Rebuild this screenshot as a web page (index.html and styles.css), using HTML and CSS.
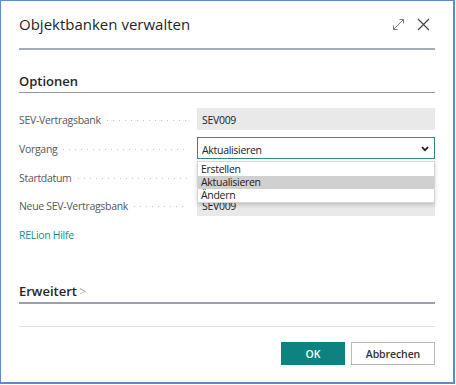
FILE: index.html
```html
<!DOCTYPE html>
<html lang="de">
<head>
<meta charset="utf-8">
<title>Objektbanken verwalten</title>
<link rel="stylesheet" href="styles.css">
</head>
<body>
<div class="dialog">
  <header class="head">
    <h1 class="title">Objektbanken verwalten</h1>
    <div class="head-icons">
      <svg class="icon" width="13" height="13" viewBox="0 0 13 13" aria-hidden="true">
        <path d="M1.5 11.5 L11.5 1.5 M7.5 1.5 H11.5 V5.5 M1.5 7.5 V11.5 H5.5" fill="none" stroke="#7a7a7a" stroke-width="1"/>
      </svg>
      <svg class="icon" width="13" height="13" viewBox="0 0 13 13" aria-hidden="true">
        <path d="M1 1 L12 12 M12 1 L1 12" fill="none" stroke="#444" stroke-width="1.2"/>
      </svg>
    </div>
  </header>

  <section class="section">
    <h2 class="section-title">Optionen</h2>
    <div class="rows">
      <div class="row">
        <span class="label">SEV-Vertragsbank</span><span class="leader"></span>
        <div class="field readonly">SEV009</div>
      </div>
      <div class="row">
        <span class="label">Vorgang</span><span class="leader"></span>
        <div class="field select">
          <span>Aktualisieren</span>
          <svg class="chev" width="8" height="6" viewBox="0 0 8 6" aria-hidden="true"><path d="M1 1.2 L4 4.2 L7 1.2" fill="none" stroke="#222" stroke-width="1.8"/></svg>
          <ul class="menu">
            <li>Erstellen</li>
            <li class="active">Aktualisieren</li>
            <li>Ändern</li>
          </ul>
        </div>
      </div>
      <div class="row">
        <span class="label">Startdatum</span><span class="leader"></span>
        <div class="field readonly"></div>
      </div>
      <div class="row last">
        <span class="label">Neue SEV-Vertragsbank</span><span class="leader"></span>
        <div class="field readonly">SEV009</div>
      </div>
    </div>
    <a class="help" href="#">RELion Hilfe</a>
  </section>

  <section class="section ext">
    <h2 class="section-title">Erweitert<span class="gt">&gt;</span></h2>
  </section>

  <footer class="foot">
    <button class="btn primary">OK</button>
    <button class="btn">Abbrechen</button>
  </footer>
</div>
</body>
</html>
```

FILE: styles.css
```css
* { box-sizing: border-box; }
html, body { margin: 0; padding: 0; background: #fff; }
body {
  width: 456px;
  height: 385px;
  font-family: "Open Sans", "Noto Sans", sans-serif;
  color: #212121;
}
.dialog {
  width: 455px;
  height: 384px;
  border: 1px solid #5a8ccc;
  border-right-width: 2px;
  border-bottom-width: 2px;
  padding: 0 18px 0 18px;
  display: flex;
  flex-direction: column;
}
.head {
  height: 49px;
  flex: none;
  display: flex;
  align-items: center;
  justify-content: space-between;
  border-bottom: 2px solid #a3abb8;
}
.title {
  margin: 0;
  padding-bottom: 1px;
  font-size: 15px;
  line-height: 20px;
  font-weight: 400;
  color: #1f1f1f;
}
.head-icons {
  display: flex;
  gap: 12px;
  margin-right: 5px;
}
.icon { display: block; }

.section { display: flex; flex-direction: column; }
.section-title {
  margin: 22px 0 0 0;
  padding-bottom: 2px;
  font-size: 13px;
  line-height: 18px;
  font-weight: 600;
  color: #262626;
  border-bottom: 1px solid #8d96a3;
}
.rows {
  margin-top: 15px;
  display: flex;
  flex-direction: column;
  gap: 7px;
}
.row {
  display: flex;
  align-items: center;
  height: 22px;
}
.row.last { margin-top: -1px; }
.label {
  font-size: 10.5px;
  letter-spacing: -0.3px;
  color: #585858;
  white-space: nowrap;
  padding-top: 2px;
  padding-right: 6px;
}
.leader {
  flex: 1;
  height: 1px;
  margin-top: 2px;
  margin-right: 10px;
  background: repeating-linear-gradient(to right, #c2c2c2 0 1px, transparent 1px 6px);
}
.field {
  flex: 0 0 238px;
  height: 22px;
  font-size: 10.5px;
  letter-spacing: -0.3px;
  display: flex;
  align-items: center;
  padding-left: 5px;
  padding-top: 2px;
  color: #222;
}
.readonly { background: #e9e9ea; }
.select {
  position: relative;
  border: 1px solid #2e8a8a;
  background: #fff;
  justify-content: space-between;
  padding-left: 4px;
  padding-top: 3px;
  padding-right: 5px;
}
.chev { display: block; margin-top: -2px; }
.menu {
  position: absolute;
  left: -1px;
  top: 23px;
  width: 238px;
  margin: 0;
  padding: 1px 0 0 0;
  list-style: none;
  background: #fff;
  border: 1px solid #d6d6d6;
  box-shadow: 0 2px 4px rgba(0,0,0,0.18);
  z-index: 2;
}
.menu li {
  height: 13px;
  line-height: 13px;
  padding-left: 3px;
  font-size: 10.5px;
  letter-spacing: -0.3px;
  color: #222;
}
.menu li.active { background: #d0d0d0; }

.help {
  margin-top: 11px;
  font-size: 10.5px;
  letter-spacing: -0.3px;
  line-height: 16px;
  color: #168b8b;
  text-decoration: none;
  font-weight: 500;
}
.ext .section-title {
  margin-top: 39px;
  border-bottom: 2px solid #9aa1ab;
  padding-bottom: 2px;
}
.gt {
  font-weight: 300;
  color: #777;
  margin-left: 2px;
}
.foot {
  margin-top: 22px;
  border-top: 1px solid #e1e1e1;
  display: flex;
  justify-content: flex-end;
  gap: 6px;
  padding-top: 15px;
}
.btn {
  height: 23px;
  font-family: inherit;
  font-size: 10.5px;
  font-weight: 600;
  letter-spacing: -0.1px;
  border: 1px solid #b9b9b9;
  background: #fff;
  color: #333;
  width: 84px;
  padding: 0;
  cursor: pointer;
}
.btn.primary {
  width: 64px;
  background: #0e8281;
  border-color: #0e8281;
  color: #fff;
}
```
